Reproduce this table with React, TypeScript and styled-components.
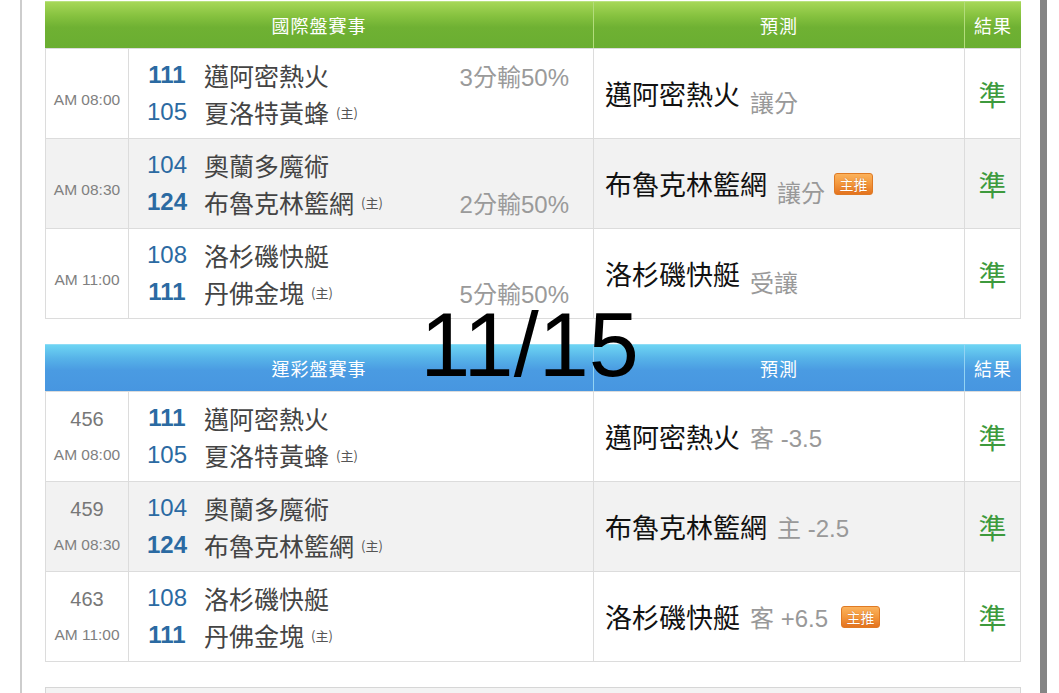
import React from "react";
import styled, { createGlobalStyle } from "styled-components";

const Global = createGlobalStyle`
  html, body { margin: 0; padding: 0; background: #fff; overflow: hidden; }
  body { font-family: "Liberation Sans", "Noto Sans CJK TC", sans-serif; }
`;

const Page = styled.div`
  position: relative;
  width: 1059px;
  height: 693px;
  overflow: hidden;
`;

const Frame = styled.div`
  box-sizing: border-box;
  margin-left: 20px;
  width: 1027px;
  height: 693px;
  border-left: 2px solid #cdcdcd;
  border-right: 7px solid #858585;
  padding: 1px 19px 0 23px;
  display: flex;
  flex-direction: column;
  gap: 25px;
`;

const Table = styled.section`
  width: 976px;
  display: flex;
  flex-direction: column;
`;

const Header = styled.div<{ $tone: "green" | "blue" }>`
  display: grid;
  grid-template-columns: 549px 371px 1fr;
  height: 47px;
  background: ${(p) =>
    p.$tone === "green"
      ? "linear-gradient(#a6d758 0%, #86c23f 30%, #6fb133 55%, #6aae31 100%)"
      : "linear-gradient(#6dd4f3 0%, #56b2e8 30%, #4a9be2 55%, #4796e0 100%)"};
  border-top: 1px solid ${(p) => (p.$tone === "green" ? "#b9e280" : "#8edcf6")};
  box-sizing: border-box;
`;

const HeadCell = styled.div<{ $tone: "green" | "blue"; $last?: boolean }>`
  display: flex;
  align-items: center;
  justify-content: center;
  color: #fff;
  font-size: 18px;
  letter-spacing: 1px;
  border-right: ${(p) =>
    p.$last ? "none" : `1px solid ${p.$tone === "green" ? "#b3dc7c" : "#93d3f3"}`};
`;

const Body = styled.div`
  border-left: 1px solid #dcdcdc;
  border-right: 1px solid #dcdcdc;
  border-bottom: 1px solid #dcdcdc;
`;

const Row = styled.div<{ $alt?: boolean }>`
  display: grid;
  grid-template-columns: 83px 465px 371px 1fr;
  height: 90px;
  box-sizing: border-box;
  border-top: 1px solid #dcdcdc;
  background: ${(p) => (p.$alt ? "#f2f2f2" : "#fff")};
`;

const TimeCell = styled.div<{ $shift?: boolean }>`
  border-right: 1px solid #dcdcdc;
  display: flex;
  flex-direction: column;
  align-items: center;
  justify-content: center;
  padding-top: ${(p) => (p.$shift ? "12px" : "0")};
  color: #808080;
`;

const GameNo = styled.div`
  font-size: 20px;
  line-height: 36px;
  color: #777;
`;

const Time = styled.div`
  font-size: 15.5px;
  line-height: 36px;
`;

const MatchCell = styled.div`
  border-right: 1px solid #dcdcdc;
  display: flex;
  flex-direction: column;
  justify-content: center;
  padding: 0 24px 0 13px;
`;

const Line = styled.div`
  display: flex;
  align-items: center;
  height: 37px;
`;

const TeamNo = styled.span<{ $bold?: boolean }>`
  width: 50px;
  text-align: center;
  font-size: 24px;
  color: #2b6aa2;
  font-weight: ${(p) => (p.$bold ? 700 : 400)};
`;

const TeamName = styled.span`
  margin-left: 12px;
  font-size: 25px;
  color: #444;
  font-family: "Noto Sans CJK TC", sans-serif;
`;

const HomeMark = styled.span`
  margin-left: 7px;
  font-size: 13px;
  color: #555;
  font-family: "Noto Sans CJK TC", sans-serif;
`;

const Odds = styled.span`
  margin-left: auto;
  font-size: 24px;
  color: #9a9a9a;
`;

const PickCell = styled.div`
  border-right: 1px solid #dcdcdc;
  display: flex;
  align-items: center;
  padding-left: 11px;
`;

const PickName = styled.span`
  font-size: 27px;
  color: #111;
  font-family: "Noto Sans CJK TC", sans-serif;
`;

const PickTag = styled.span<{ $drop?: boolean }>`
  margin-left: 10px;
  margin-top: ${(p) => (p.$drop ? "16px" : "0")};
  font-size: 24px;
  color: #999;
`;

const Badge = styled.span<{ $gap: number }>`
  margin-left: ${(p) => p.$gap}px;
  width: 39px;
  height: 22px;
  box-sizing: border-box;
  display: inline-flex;
  align-items: center;
  justify-content: center;
  border-radius: 3px;
  border: 1px solid #df7a24;
  background: linear-gradient(#fbb25c 0%, #f49a3f 45%, #e4731f 100%);
  color: #fff;
  font-size: 14px;
  font-family: "Noto Sans CJK TC", sans-serif;
  text-shadow: 0 0 1px rgba(150, 60, 0, 0.7);
`;

const ResultCell = styled.div`
  display: flex;
  align-items: center;
  justify-content: center;
  font-size: 28px;
  color: #3d9a3d;
  font-family: "Noto Sans CJK TC", sans-serif;
`;

const NextBox = styled.div`
  width: 976px;
  height: 40px;
  box-sizing: border-box;
  border: 1px solid #d6d6d6;
  background: #f3f3f3;
  flex-shrink: 0;
`;

const DateOverlay = styled.div`
  position: absolute;
  left: 0;
  right: 0;
  top: 300px;
  text-align: center;
  font-family: "Liberation Sans", sans-serif;
  font-size: 90px;
  line-height: 90px;
  color: #000;
  pointer-events: none;
`;

type Team = { no: string; name: string; bold?: boolean };
type Game = {
  gameNo?: string;
  time: string;
  away: Team;
  home: Team;
  odds?: string;
  oddsLine?: 0 | 1;
  pick: string;
  tag: string;
  badge?: boolean;
};

const intl: Game[] = [
  {
    time: "AM 08:00",
    away: { no: "111", name: "邁阿密熱火", bold: true },
    home: { no: "105", name: "夏洛特黃蜂" },
    odds: "3分輸50%",
    oddsLine: 0,
    pick: "邁阿密熱火",
    tag: "讓分",
  },
  {
    time: "AM 08:30",
    away: { no: "104", name: "奧蘭多魔術" },
    home: { no: "124", name: "布魯克林籃網", bold: true },
    odds: "2分輸50%",
    oddsLine: 1,
    pick: "布魯克林籃網",
    tag: "讓分",
    badge: true,
  },
  {
    time: "AM 11:00",
    away: { no: "108", name: "洛杉磯快艇" },
    home: { no: "111", name: "丹佛金塊", bold: true },
    odds: "5分輸50%",
    oddsLine: 1,
    pick: "洛杉磯快艇",
    tag: "受讓",
  },
];

const lottery: Game[] = [
  {
    gameNo: "456",
    time: "AM 08:00",
    away: { no: "111", name: "邁阿密熱火", bold: true },
    home: { no: "105", name: "夏洛特黃蜂" },
    pick: "邁阿密熱火",
    tag: "客 -3.5",
  },
  {
    gameNo: "459",
    time: "AM 08:30",
    away: { no: "104", name: "奧蘭多魔術" },
    home: { no: "124", name: "布魯克林籃網", bold: true },
    pick: "布魯克林籃網",
    tag: "主 -2.5",
  },
  {
    gameNo: "463",
    time: "AM 11:00",
    away: { no: "108", name: "洛杉磯快艇" },
    home: { no: "111", name: "丹佛金塊", bold: true },
    pick: "洛杉磯快艇",
    tag: "客 +6.5",
    badge: true,
  },
];

function GameTable({
  title,
  tone,
  games,
  dropTag,
}: {
  title: string;
  tone: "green" | "blue";
  games: Game[];
  dropTag: boolean;
}) {
  return (
    <Table>
      <Header $tone={tone}>
        <HeadCell $tone={tone}>{title}</HeadCell>
        <HeadCell $tone={tone}>預測</HeadCell>
        <HeadCell $tone={tone} $last>
          結果
        </HeadCell>
      </Header>
      <Body>
        {games.map((g, i) => (
          <Row key={i} $alt={i % 2 === 1}>
            <TimeCell $shift={!g.gameNo}>
              {g.gameNo && <GameNo>{g.gameNo}</GameNo>}
              <Time>{g.time}</Time>
            </TimeCell>
            <MatchCell>
              {[g.away, g.home].map((t, li) => (
                <Line key={li}>
                  <TeamNo $bold={t.bold}>{t.no}</TeamNo>
                  <TeamName>{t.name}</TeamName>
                  {li === 1 && <HomeMark>(主)</HomeMark>}
                  {g.odds && g.oddsLine === li && <Odds>{g.odds}</Odds>}
                </Line>
              ))}
            </MatchCell>
            <PickCell>
              <PickName>{g.pick}</PickName>
              <PickTag $drop={dropTag}>{g.tag}</PickTag>
              {g.badge && <Badge $gap={dropTag ? 9 : 13}>主推</Badge>}
            </PickCell>
            <ResultCell>準</ResultCell>
          </Row>
        ))}
      </Body>
    </Table>
  );
}

export default function App() {
  return (
    <Page>
      <Global />
      <Frame>
        <GameTable title="國際盤賽事" tone="green" games={intl} dropTag />
        <GameTable title="運彩盤賽事" tone="blue" games={lottery} dropTag={false} />
        <NextBox />
      </Frame>
      <DateOverlay>11/15</DateOverlay>
    </Page>
  );
}
